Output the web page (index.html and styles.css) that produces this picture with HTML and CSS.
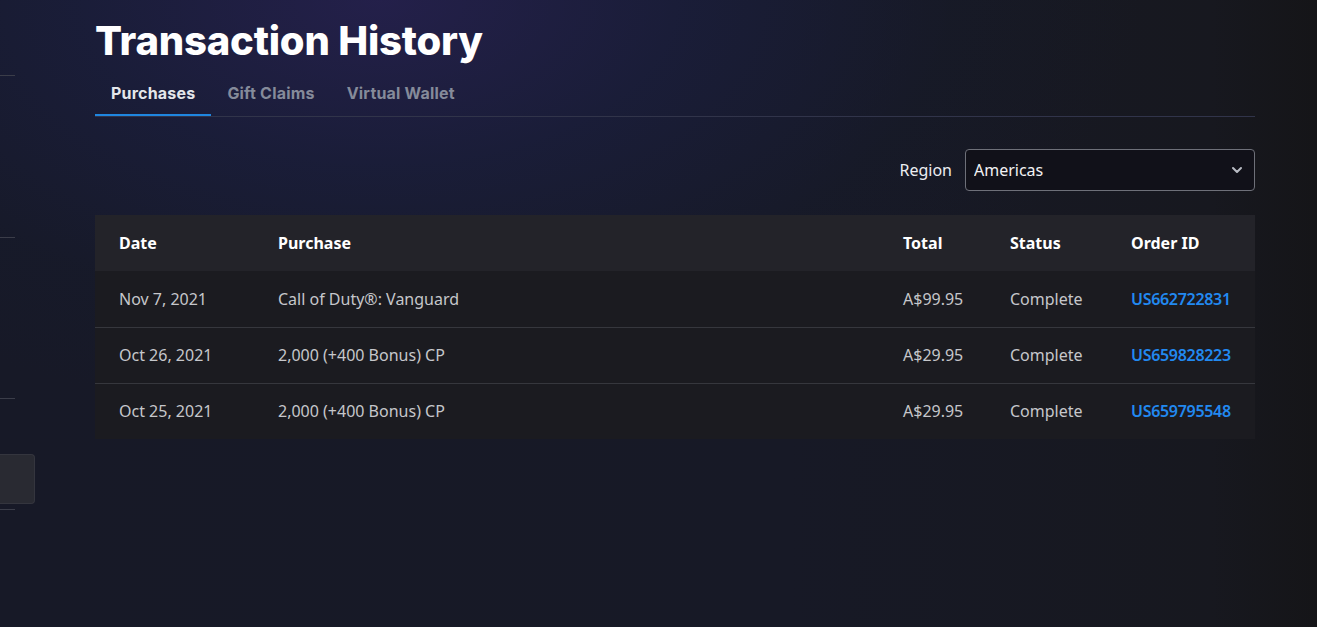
FILE: index.html
```html
<!DOCTYPE html>
<html>

<head>
    <meta charset="UTF-8">
    <title>Transaction History</title>
    <meta name="viewport" content="width=device-width,initial-scale=1" />
    <link rel="stylesheet" href="styles.css">
</head>

<body>

    <div class="page">
        <aside class="side-nav">
            <span class="side-rule side-rule-1"></span>
            <span class="side-rule side-rule-2"></span>
            <span class="side-rule side-rule-3"></span>
            <span class="side-item"></span>
            <span class="side-rule side-rule-4"></span>
        </aside>

        <main class="content">
            <h1 class="page-title">Transaction History</h1>

            <nav class="tabs">
                <a class="tab active" href="#">Purchases</a>
                <a class="tab" href="#">Gift Claims</a>
                <a class="tab" href="#">Virtual Wallet</a>
            </nav>

            <div class="filter-row">
                <label class="filter-label" for="region">Region</label>
                <div class="select-box">
                    <select id="region">
                        <option>Americas</option>
                        <option>Europe</option>
                        <option>Asia</option>
                    </select>
                    <svg class="select-arrow" width="12" height="8" viewBox="0 0 12 8">
                        <path d="M2 2l4 4 4-4" fill="none" stroke="#b9bcc4" stroke-width="2" stroke-linecap="round" stroke-linejoin="round" />
                    </svg>
                </div>
            </div>

            <table class="history">
                <colgroup>
                    <col class="col-date">
                    <col class="col-purchase">
                    <col class="col-total">
                    <col class="col-status">
                    <col class="col-order">
                </colgroup>
                <thead>
                    <tr>
                        <th>Date</th>
                        <th>Purchase</th>
                        <th>Total</th>
                        <th>Status</th>
                        <th>Order ID</th>
                    </tr>
                </thead>
                <tbody>
                    <tr>
                        <td>Nov 7, 2021</td>
                        <td>Call of Duty®: Vanguard</td>
                        <td>A$99.95</td>
                        <td>Complete</td>
                        <td><a href="#">US662722831</a></td>
                    </tr>
                    <tr>
                        <td>Oct 26, 2021</td>
                        <td>2,000 (+400 Bonus) CP</td>
                        <td>A$29.95</td>
                        <td>Complete</td>
                        <td><a href="#">US659828223</a></td>
                    </tr>
                    <tr>
                        <td>Oct 25, 2021</td>
                        <td>2,000 (+400 Bonus) CP</td>
                        <td>A$29.95</td>
                        <td>Complete</td>
                        <td><a href="#">US659795548</a></td>
                    </tr>
                </tbody>
            </table>
        </main>
    </div>

</body>

</html>
```

FILE: styles.css
```css
* {
    box-sizing: border-box;
}

html,
body {
    margin: 0;
    height: 100%;
}

body {
    font-family: "Noto Sans", "Open Sans", sans-serif;
    color: #c6c7cb;
    background:
        radial-gradient(ellipse 760px 420px at 380px 0, rgba(40, 34, 86, 0.75) 0%, rgba(28, 32, 70, 0.55) 40%, rgba(22, 28, 48, 0.25) 75%, rgba(22, 23, 30, 0) 100%),
        linear-gradient(90deg, #171927 0%, #171926 60%, #17181f 92%, #151518 100%);
    overflow: hidden;
}

.page {
    display: flex;
    min-height: 100%;
}

/* left nav, mostly scrolled out of view */
.side-nav {
    width: 35px;
    flex: none;
    display: flex;
    flex-direction: column;
    align-items: flex-start;
}

.side-rule {
    display: block;
    width: 15px;
    height: 1px;
    background: #3b3d49;
}

.side-rule-1 {
    margin-top: 75px;
}

.side-rule-2 {
    margin-top: 161px;
}

.side-rule-3 {
    margin-top: 160px;
}

.side-item {
    display: block;
    width: 35px;
    height: 50px;
    margin-top: 55px;
    background: #292a32;
    border: 1px solid #34353e;
    border-left: 0;
    border-radius: 0 4px 4px 0;
}

.side-rule-4 {
    margin-top: 5px;
}

.content {
    width: 1160px;
    margin-left: 60px;
}

.page-title {
    margin: 0;
    padding-top: 17px;
    font-family: "Inter", "Lato", sans-serif;
    font-weight: 800;
    font-size: 40px;
    line-height: 48px;
    letter-spacing: -0.2px;
    color: #fff;
}

.tabs {
    display: flex;
    margin-top: 8px;
    border-bottom: 1px solid #31344a;
}

.tab {
    display: block;
    padding: 9px 16px 10px;
    font-family: "Inter", "Lato", sans-serif;
    font-weight: 700;
    font-size: 16px;
    line-height: 22px;
    letter-spacing: 0.2px;
    color: #858b9a;
    text-decoration: none;
    border-bottom: 2px solid transparent;
}

.tab.active {
    color: #e4e6ea;
    border-bottom-color: #1f86e0;
}

.filter-row {
    display: flex;
    justify-content: flex-end;
    align-items: center;
    gap: 13px;
    margin-top: 32px;
}

.filter-label {
    font-size: 16px;
    color: #eceef2;
}

.select-box {
    position: relative;
    width: 290px;
}

.select-box select {
    display: block;
    width: 100%;
    height: 42px;
    padding: 0 30px 0 8px;
    font-family: "Noto Sans", "Open Sans", sans-serif;
    font-size: 16px;
    color: #f2f2f4;
    background: #111119;
    border: 1px solid #6e7079;
    border-radius: 4px;
    appearance: none;
    -webkit-appearance: none;
    outline: none;
}

.select-arrow {
    position: absolute;
    right: 12px;
    top: 17px;
    pointer-events: none;
}

.history {
    width: 100%;
    margin-top: 24px;
    border-collapse: collapse;
    font-size: 16px;
}

.col-date {
    width: 159px;
}

.col-total {
    width: 107px;
}

.col-status {
    width: 121px;
}

.col-order {
    width: 148px;
}

.history th,
.history td {
    height: 56px;
    padding: 0 0 0 24px;
    text-align: left;
    white-space: nowrap;
}

.history th {
    font-weight: 700;
    color: #fff;
    background: #232329;
}

.history td {
    background: #1b1b20;
    border-top: 1px solid #36373d;
}

.history tbody tr:first-child td {
    border-top: 0;
}

.history td a {
    color: #2289f0;
    font-weight: 600;
    letter-spacing: -0.3px;
    text-decoration: none;
}
```
